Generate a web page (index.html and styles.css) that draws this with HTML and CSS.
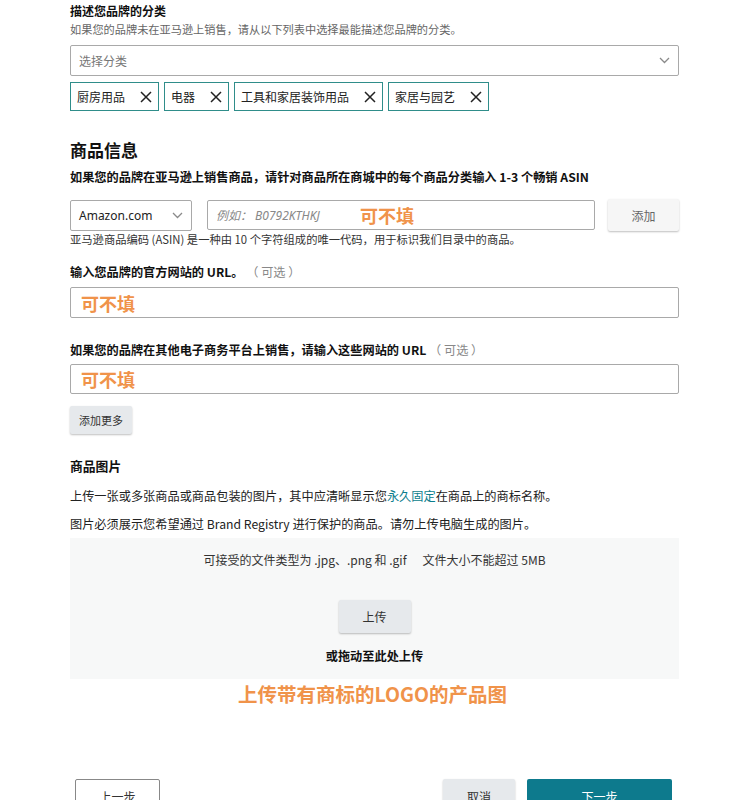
FILE: index.html
```html
<!DOCTYPE html>
<html lang="zh">
<head>
<meta charset="utf-8">
<link rel="stylesheet" href="styles.css">
</head>
<body>
<div class="page">
  <h3 class="title">描述您品牌的分类</h3>
  <p class="sub">如果您的品牌未在亚马逊上销售，请从以下列表中选择最能描述您品牌的分类。</p>
  <div class="select wide">
    <span class="ph">选择分类</span>
    <svg class="chev" width="11" height="7" viewBox="0 0 11 7"><path d="M1 1l4.5 4.5L10 1" fill="none" stroke="#8a8a8a" stroke-width="1.3"/></svg>
  </div>
  <div class="tags">
    <span class="tag">厨房用品<svg class="x" width="12" height="12" viewBox="0 0 12 12"><path d="M1 1l10 10M11 1L1 11" stroke="#222" stroke-width="1.5"/></svg></span>
    <span class="tag">电器<svg class="x" width="12" height="12" viewBox="0 0 12 12"><path d="M1 1l10 10M11 1L1 11" stroke="#222" stroke-width="1.5"/></svg></span>
    <span class="tag">工具和家居装饰用品<svg class="x" width="12" height="12" viewBox="0 0 12 12"><path d="M1 1l10 10M11 1L1 11" stroke="#222" stroke-width="1.5"/></svg></span>
    <span class="tag">家居与园艺<svg class="x" width="12" height="12" viewBox="0 0 12 12"><path d="M1 1l10 10M11 1L1 11" stroke="#222" stroke-width="1.5"/></svg></span>
  </div>

  <h2 class="heading">商品信息</h2>
  <p class="boldline">如果您的品牌在亚马逊上销售商品，请针对商品所在商城中的每个商品分类输入 1-3 个畅销 ASIN</p>
  <div class="row">
    <div class="select market">
      <span class="val">Amazon.com</span>
      <svg class="chev" width="11" height="7" viewBox="0 0 11 7"><path d="M1 1l4.5 4.5L10 1" fill="none" stroke="#8a8a8a" stroke-width="1.3"/></svg>
    </div>
    <div class="input asin"><span class="eg">例如： B0792KTHKJ</span><span class="note">可不填</span></div>
    <button class="btn add">添加</button>
  </div>
  <p class="help">亚马逊商品编码 (ASIN) 是一种由 10 个字符组成的唯一代码，用于标识我们目录中的商品。</p>

  <p class="label l1">输入您品牌的官方网站的 URL。 <span class="opt">（ 可选 ）</span></p>
  <div class="input full i1"><span class="note">可不填</span></div>

  <p class="label l2">如果您的品牌在其他电子商务平台上销售，请输入这些网站的 URL <span class="opt">（ 可选 ）</span></p>
  <div class="input full i2"><span class="note">可不填</span></div>
  <button class="btn more">添加更多</button>

  <p class="label l3">商品图片</p>
  <p class="text t1">上传一张或多张商品或商品包装的图片，其中应清晰显示您<span class="link">永久固定</span>在商品上的商标名称。</p>
  <p class="text t2">图片必须展示您希望通过 Brand Registry 进行保护的商品。请勿上传电脑生成的图片。</p>

  <div class="upload">
    <p class="types">可接受的文件类型为 .jpg、.png 和 .gif<span class="gap"></span>文件大小不能超过 5MB</p>
    <button class="btn up">上传</button>
    <p class="drag">或拖动至此处上传</p>
  </div>
  <p class="annot">上传带有商标的LOGO的产品图</p>

  <div class="footer">
    <button class="btn prev">上一步</button>
    <div class="right">
      <button class="btn cancel">取消</button>
      <button class="btn next">下一步</button>
    </div>
  </div>
</div>
</body>
</html>
```

FILE: styles.css
```css
* { box-sizing: border-box; }
html, body { margin: 0; padding: 0; background: #fff; height: 800px; overflow: hidden; }
body {
  font-family: "Noto Sans CJK SC", "Noto Sans", sans-serif;
  color: #111;
}
.page {
  width: 609px;
  margin-left: 70px;
  padding-top: 3px;
}
p, h2, h3 { margin: 0; }
.title { font-size: 12px; line-height: 16px; font-weight: 700; }
.sub { font-size: 11.2px; line-height: 14px; margin-top: 3px; color: #666; }

.select {
  display: flex;
  align-items: center;
  justify-content: space-between;
  border: 1px solid #a9a9a9;
  border-radius: 2px;
  background: #fff;
}
.wide { margin-top: 9px; height: 31px; padding: 0 8px 0 8px; }
.wide .ph { font-size: 12px; color: #777; }
.chev { flex: none; }

.tags { display: flex; gap: 5px; margin-top: 6px; }
.tag {
  display: flex;
  align-items: center;
  height: 29px;
  border: 1px solid #2f8d8a;
  padding: 0 6px 0 6px;
  font-size: 12px;
  color: #222;
}
.tag .x { margin-left: 15px; flex: none; }

.heading { font-size: 17px; line-height: 24px; font-weight: 700; margin-top: 27px; }
.boldline { font-size: 12.2px; line-height: 16px; font-weight: 700; margin-top: 7px; white-space: nowrap; }

.row { display: flex; align-items: flex-start; margin-top: 14px; height: 33px; }
.market { margin-top: 1px; width: 122px; height: 31px; padding: 0 8px; flex: none; }
.market .val { font-family: "Noto Sans", sans-serif; font-size: 12px; color: #222; }
.input {
  border: 1px solid #a9a9a9;
  border-radius: 2px;
  background: #fff;
  display: flex;
  align-items: center;
}
.asin { margin-top: 1px; margin-left: 15px; width: 388px; height: 30px; padding-left: 8px; }
.eg { font-family: "Noto Sans", "Noto Sans CJK SC", sans-serif; font-style: italic; font-size: 12px; color: #888; width: 144px; }
.note { color: #f0934a; font-weight: 700; font-size: 18px; }
.btn {
  font-family: "Noto Sans CJK SC", sans-serif;
  border: none;
  border-radius: 2px;
  background: #f1f2f3;
  box-shadow: 0 1px 2px rgba(0,0,0,0.25);
  color: #333;
  padding: 0;
  cursor: pointer;
}
.add { margin-left: 13px; width: 71px; height: 32px; font-size: 12px; color: #666; background: #f6f6f6; }
.help { font-size: 11.3px; line-height: 14px; color: #333; }

.label { font-size: 12.2px; line-height: 16px; font-weight: 700; white-space: nowrap; }
.label .opt { font-weight: 400; color: #888; }
.l1 { margin-top: 18px; }
.full { padding-left: 10px; }
.i1 { margin-top: 7px; height: 31px; }
.l2 { margin-top: 24px; }
.i2 { margin-top: 6px; height: 30px; }
.more { display: block; margin-top: 12px; width: 62px; height: 28px; font-size: 11px; background: #e6e9ec; }

.l3 { margin-top: 24px; font-size: 12.8px; }
.text { font-size: 12.2px; line-height: 16px; color: #222; white-space: nowrap; }
.t1 { margin-top: 14px; }
.t2 { margin-top: 12px; }
.link { color: #0b7d8c; }

.upload {
  margin-top: 6px;
  height: 141px;
  background: #f7f8f8;
  display: flex;
  flex-direction: column;
  align-items: center;
  padding-top: 15px;
}
.types { font-size: 12px; line-height: 14px; color: #333; white-space: nowrap; }
.types .gap { display: inline-block; width: 16px; }
.up { margin-top: 33px; width: 72px; height: 33px; font-size: 12px; background: #e6e9ec; }
.drag { margin-top: 15px; font-size: 12.2px; line-height: 16px; font-weight: 700; }
.annot { margin-top: 3px; text-align: center; font-size: 19.5px; line-height: 24px; color: #f0934a; font-weight: 700; padding-right: 4px; }

.footer { margin-top: 73px; display: flex; justify-content: space-between; padding: 0 7px 0 5px; }
.prev { width: 85px; height: 34px; background: #fff; border: 1px solid #888; box-shadow: none; font-size: 12px; }
.right { display: flex; gap: 12px; }
.cancel { width: 72px; height: 34px; background: #e6e9ec; font-size: 12px; }
.next { width: 145px; height: 34px; background: #0d7a8d; color: #fff; font-size: 12px; box-shadow: none; }
```
